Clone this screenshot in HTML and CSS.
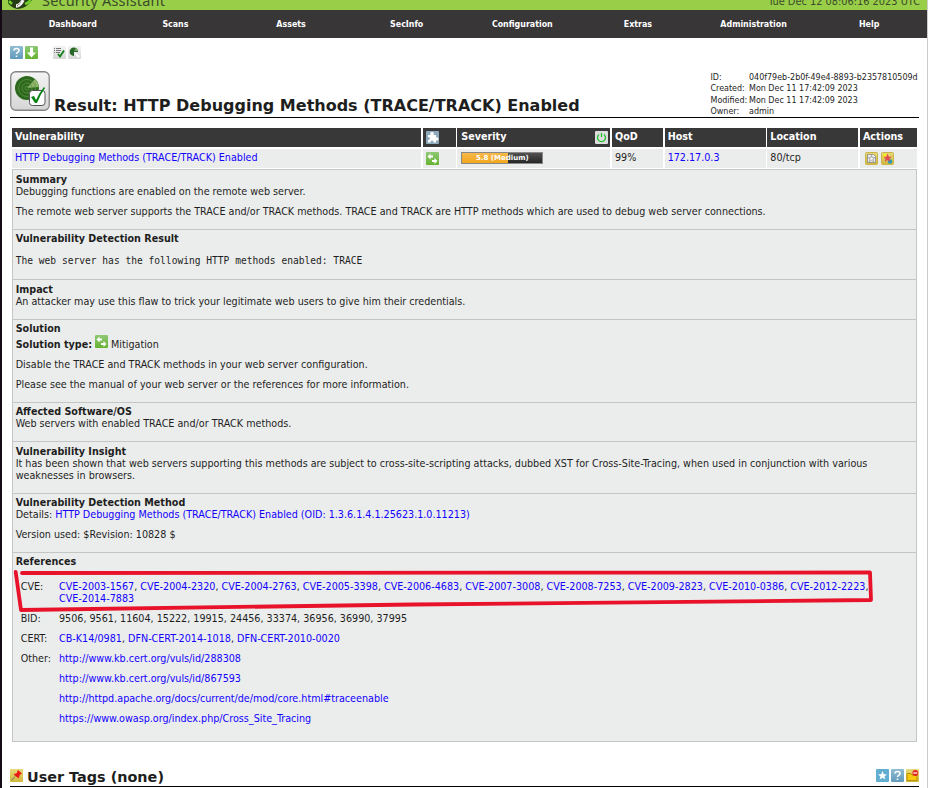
FILE: index.html
```html
<!DOCTYPE html>
<html lang="en">
<head>
<meta charset="utf-8">
<title>Security Assistant</title>
<link rel="stylesheet" href="styles.css">
</head>
<body>
<svg width="0" height="0" class="defs">
  <defs>
    <linearGradient id="green" x1="0" y1="0" x2="0" y2="1"><stop offset="0" stop-color="#90c978"/><stop offset="1" stop-color="#64b32e"/></linearGradient>
    <linearGradient id="blue" x1="0" y1="0" x2="0" y2="1"><stop offset="0" stop-color="#91bdd3"/><stop offset="1" stop-color="#609abb"/></linearGradient>
    <linearGradient id="gray" x1="0" y1="0" x2="0" y2="1"><stop offset="0" stop-color="#f4f4f4"/><stop offset="1" stop-color="#d5d5d5"/></linearGradient>
    <linearGradient id="gold" x1="0" y1="0" x2="0" y2="1"><stop offset="0" stop-color="#e8d979"/><stop offset="1" stop-color="#d1b83a"/></linearGradient>
    <symbol id="help" viewBox="0 0 13 13"><rect width="13" height="13" rx="1" fill="url(#blue)"/><path d="M4 4.5C4 1.8 9 1.8 9 4.5C9 6.4 6.5 6.2 6.5 8M6.5 9.5V11" fill="none" stroke="#fff" stroke-width="1.6"/></symbol>
    <symbol id="mitigate" viewBox="0 0 13 13"><rect width="13" height="13" rx="1" fill="url(#green)"/><path d="M1.500 4.500L4.500 1.500V3.500H7V5.500H4.500V7.500ZM11.500 9L8.500 6V8H6V10H8.500V12Z" fill="#fff"/></symbol>
  </defs>
</svg>
<div class="page">
  <header class="banner">
    <svg class="logo" width="28" height="10" viewBox="0 0 28 10"><path d="M0 0H24C21 5 15 9 9 9C5 8 1 5 0 3Z" fill="#243d12"/><path d="M1 1L4 4M17 4C20 3 22 1 22 0" fill="none" stroke="#6fd02a" stroke-width="2.5"/><path d="M8 6C11 6 13 4 15 0" stroke="#f2f2f2" stroke-width="3.500" fill="none"/><path d="M9 6C11 5 12 3 13 0" stroke="#444" stroke-dasharray="1 1" fill="none"/></svg>
    <span class="brand">Security Assistant</span>
    <span class="clock">Tue Dec 12 08:06:16 2023 UTC</span>
  </header>
  <nav class="menu"><a>Dashboard</a><a>Scans</a><a>Assets</a><a>SecInfo</a><a>Configuration</a><a>Extras</a><a>Administration</a><a>Help</a></nav>
  <main>
    <div class="tools">
      <svg width="13" height="13"><use href="#help"/></svg>
      <svg width="13" height="13"><rect width="13" height="13" rx="1" fill="url(#green)"/><path d="M5 1.500H8V6.500H11L6.500 11.500L2 6.500H5Z" fill="#fff"/></svg>
      <svg class="gap" width="13" height="13"><rect width="13" height="13" rx="1" fill="url(#gray)"/><path d="M1 2.500H2M1 4.500H2M1 6.500H2M3 2.500H8M3 4.500H8M3 6.500H7" stroke="#777"/><path d="M5 8L7 10.500L11 4.500" stroke="#128018" stroke-width="1.800" fill="none"/></svg>
      <svg width="13" height="13"><rect width="13" height="13" rx="1" fill="url(#gray)"/><path d="M6 6H10A4.200 4.200 0 1 0 6 10Z" fill="#286528"/><path d="M6 5L8 1.800A4 4 0 0 1 10 5Z" fill="#78a668"/><path d="M6 6L12 10L10 12Z" fill="#fff"/></svg>
    </div>
    <div class="title">
      <svg width="40" height="40" viewBox="0 0 40 40"><rect x=".75" y=".75" width="38.5" height="38.5" rx="5" fill="url(#gray)" stroke="#858585" stroke-width="1.3"/><circle cx="17" cy="17" r="12" fill="#2d691c"/><path d="M17 17L25 8Q28 11 29 16Z" fill="#8fb66b"/><g fill="none" stroke="#5d9046" stroke-width=".8"><circle cx="17" cy="17" r="8.5"/><circle cx="17" cy="17" r="5"/><circle cx="17" cy="17" r="2"/></g><rect x="19.500" y="19.500" width="15.500" height="15" rx="3" fill="#fff" stroke="#555"/><path d="M21 26L24 25L26 29Q29 22 34 16L35 17Q30 24 27 32H25Z" fill="#078313"/></svg>
      <h1>Result: HTTP Debugging Methods (TRACE/TRACK) Enabled</h1>
      <dl><dt>ID:</dt><dd>040f79eb-2b0f-49e4-8893-b2357810509d</dd><dt>Created:</dt><dd>Mon Dec 11 17:42:09 2023</dd><dt>Modified:</dt><dd>Mon Dec 11 17:42:09 2023</dd><dt>Owner:</dt><dd>admin</dd></dl>
    </div>
    <div class="grid head">
      <div>Vulnerability</div>
      <div><svg width="13" height="13"><rect width="13" height="13" rx="1" fill="#8eaabd"/><path d="M2 4H4.500Q3.500 1 6 1Q8.500 1 7.500 4H10V6.500Q12.500 5.500 12.500 8Q12.500 10 10 9.500V11.500H7.500Q8 9.500 6 9.500Q4 9.500 4.500 11.500H2V9Q4 9 4 7.500Q4 6 2 6Z" fill="#fff"/></svg></div>
      <div class="sev">Severity<svg width="13" height="13"><rect width="13" height="13" rx="1" fill="#ddd"/><path d="M4 3.500A4 4 0 1 0 9 3.500M6.500 2V6" fill="none" stroke="#20c52b" stroke-width="1.300"/></svg></div>
      <div>QoD</div><div>Host</div><div>Location</div><div>Actions</div>
    </div>
    <div class="grid row">
      <div><a>HTTP Debugging Methods (TRACE/TRACK) Enabled</a></div>
      <div><svg width="13" height="13"><use href="#mitigate"/></svg></div>
      <div><span class="meter">5.8 (Medium)</span></div>
      <div>99%</div><div><a>172.17.0.3</a></div><div>80/tcp</div>
      <div class="acts">
        <svg width="13" height="13"><rect x=".5" y=".5" width="12" height="12" rx="1" fill="url(#gold)" stroke="#c9b548"/><path d="M2.500 2.500H8.500L10.500 4.500V10.500H2.500Z" fill="#eee" stroke="#888" stroke-width=".8"/><path d="M6.500 3.500L7.300 5.800H9.700L7.800 7.200L8.700 9.700L6.500 8.200L4.300 9.700L5.200 7.200L3.300 5.800H5.700Z" fill="#fff" stroke="#777" stroke-width=".6"/></svg>
        <svg width="13" height="13"><rect x=".5" y=".5" width="12" height="12" rx="1" fill="url(#gold)" stroke="#c9b548"/><path d="M2 2H6V6H2Z" fill="#f1ed28"/><circle cx="9" cy="9.500" r="2.300" fill="#239cbd"/><path d="M6.500 1.500L7.800 4.700H11L8.400 6.700L9.400 10L6.500 8L3.600 10L4.600 6.700L2 4.700H5.200Z" fill="#e14b55"/></svg>
      </div>
    </div>
    <div class="details">
      <section class="s1"><h2>Summary</h2><p>Debugging functions are enabled on the remote web server.</p><p class="para">The remote web server supports the TRACE and/or TRACK methods. TRACE and TRACK are HTTP methods which are used to debug web server connections.</p></section>
      <section class="s2"><h2>Vulnerability Detection Result</h2><pre>The web server has the following HTTP methods enabled: TRACE</pre></section>
      <section class="s3"><h2>Impact</h2><p>An attacker may use this flaw to trick your legitimate web users to give him their credentials.</p></section>
      <section class="s4"><h2>Solution</h2><div class="soltype"><b>Solution type:</b><svg width="13" height="13"><use href="#mitigate"/></svg><span>Mitigation</span></div><p class="para">Disable the TRACE and TRACK methods in your web server configuration.</p><p class="para">Please see the manual of your web server or the references for more information.</p></section>
      <section class="s5"><h2>Affected Software/OS</h2><p>Web servers with enabled TRACE and/or TRACK methods.</p></section>
      <section class="s6"><h2>Vulnerability Insight</h2><p>It has been shown that web servers supporting this methods are subject to cross-site-scripting attacks, dubbed XST for Cross-Site-Tracing, when used in conjunction with various<br>weaknesses in browsers.</p></section>
      <section class="s7"><h2>Vulnerability Detection Method</h2><p>Details: <a>HTTP Debugging Methods (TRACE/TRACK) Enabled (OID: 1.3.6.1.4.1.25623.1.0.11213)</a></p><p class="para">Version used: $Revision: 10828 $</p></section>
      <section class="s8"><h2>References</h2>
        <div class="refs">
          <span>CVE:</span><p><a>CVE-2003-1567</a>, <a>CVE-2004-2320</a>, <a>CVE-2004-2763</a>, <a>CVE-2005-3398</a>, <a>CVE-2006-4683</a>, <a>CVE-2007-3008</a>, <a>CVE-2008-7253</a>, <a>CVE-2009-2823</a>, <a>CVE-2010-0386</a>, <a>CVE-2012-2223</a>,<br><a>CVE-2014-7883</a></p>
          <span>BID:</span><p>9506, 9561, 11604, 15222, 19915, 24456, 33374, 36956, 36990, 37995</p>
          <span>CERT:</span><p><a>CB-K14/0981</a>, <a>DFN-CERT-2014-1018</a>, <a>DFN-CERT-2010-0020</a></p>
          <span>Other:</span><p><a>http://www.kb.cert.org/vuls/id/288308</a></p>
          <span></span><p><a>http://www.kb.cert.org/vuls/id/867593</a></p>
          <span></span><p><a>http://httpd.apache.org/docs/current/de/mod/core.html#traceenable</a></p>
          <span></span><p><a>https://www.owasp.org/index.php/Cross_Site_Tracing</a></p>
        </div>
        <svg class="mark" width="864" height="46" viewBox="0 0 864 46" fill="none" stroke="#e8132b" stroke-linecap="round" stroke-linejoin="round"><path d="M9 5L857 4.500L858 32L400 36.500L8 42L2.700 4"/></svg>
      </section>
    </div>
    <div class="tags">
      <svg width="13" height="13"><rect width="13" height="13" rx="1" fill="url(#gold)"/><path d="M1.500 11.500L5 7.500" stroke="#777"/><path d="M8 1.500L11.500 4.500L9.500 5.500L8.500 9L4 5.500L7 4.500Z" fill="#ee1717" stroke="#ee1717" stroke-width=".7"/></svg>
      <h1>User Tags (none)</h1>
      <div class="tagtools">
        <svg width="13" height="13"><rect width="13" height="13" rx="1" fill="#62aed2"/><path d="M6.500 2L7.800 5.200L11 5.400L8.500 7.400L9.400 10.600L6.500 8.800L3.600 10.600L4.500 7.400L2 5.400L5.200 5.200Z" fill="#fff"/></svg>
        <svg width="13" height="13"><use href="#help"/></svg>
        <svg width="13" height="13"><rect width="13" height="13" rx="1" fill="url(#gold)"/><path d="M1 4.500H5L6 6H11V11.500H1Z" fill="#f6c90c" stroke="#b89208"/><circle cx="9.300" cy="4" r="2.900" fill="#e52420"/><path d="M7.300 4H11.300" stroke="#fff" stroke-width="1.200"/></svg>
      </div>
    </div>
  </main>
</div>
</body>
</html>
```
FILE: styles.css
```css
* { box-sizing: border-box; }
body { margin: 0; background: #fff; color: #1e1e1e; font: 10.680px/12px "DejaVu Sans Condensed", "DejaVu Sans", sans-serif; font-stretch: condensed; }
h1, h2, p, pre, dl, dd { margin: 0; }
svg { display: block; flex: none; }
.defs { position: absolute; }
a { color: #1200ff; }
.page { height: 788px; overflow: hidden; border-left: 2px solid #150b15; border-right: 1px solid #ccc; }
.banner { height: 10px; background: #99ce48; display: flex; overflow: hidden; color: #3a4a2a; }
.logo { margin-left: 6px; }
.brand { margin: -9px 0 0 6px; font: 14.500px/18px "Noto Sans", sans-serif; font-stretch: normal; letter-spacing: .2px; white-space: nowrap; }
.clock { margin: -5px 7px 0 auto; font-size: 10.900px; line-height: 14px; white-space: nowrap; }
.menu { height: 28px; background: #393637; display: grid; grid-template-columns: repeat(8, 1fr); align-items: center; text-align: center; font-weight: bold; }
.menu a { color: #fff; font-size: 8.800px; }
.menu a:first-child { padding-left: 26px; }
main { padding: 8px 8px 0; }
.tools { display: flex; gap: 2px; height: 25px; }
.tools .gap { margin-left: 13px; }
.title { height: 47px; border-bottom: 1px solid #000; display: flex; }
h1 { font: bold 16px/20px "DejaVu Sans", sans-serif; white-space: nowrap; }
.title h1 { margin: 25px 0 0 4px; }
dl { margin: 1px 0 0 auto; display: grid; grid-template-columns: 38.500px 170px; grid-auto-rows: 11.400px; font-size: 8.900px; line-height: 11px; white-space: nowrap; }
.grid { display: grid; grid-template-columns: 409px 33px 153px 51px 101px 91px 57px; column-gap: 1.670px; margin: 0 2px; white-space: nowrap; }
.grid > div { height: 19px; padding: 3px; }
.grid > div:nth-child(3) { padding-left: 4px; }
.head { margin-top: 10px; color: #fff; font-weight: bold; }
.head > div { background: #393838; }
.sev { display: flex; justify-content: space-between; }
.head .sev { padding-right: 2px; }
.row { margin-top: 2px; }
.row > div { background: #ebedec; }
.meter { display: block; width: 82px; height: 12px; border: 1px solid #888; background: linear-gradient(rgba(255, 255, 255, .2), rgba(255, 255, 255, 0)), linear-gradient(to right, #f3a71e 57%, #262626 57%); font: bold 7px/10px "DejaVu Sans", sans-serif; color: #fff; text-align: center; }
.acts { display: flex; gap: 3px; padding-left: 5px !important; }
.details { margin: 1px 2px 0; border: 1px solid #c4c6c5; background: #ebedec; white-space: nowrap; height: 573px; }
section { padding: 3px 0 0 2.700px; border-bottom: 1px solid #c4c6c5; }
h2 { font: inherit; font-weight: bold; }
.para { margin-top: 8px; }
pre { margin-top: 10px; font: 9.600px/12px "DejaVu Sans Mono", monospace; }
.s1 { height: 60px; padding-top: 4px; }
.s2 { height: 50px; }
.s3 { height: 40px; padding-top: 4px; }
.s4 { height: 83px; }
.s5 { height: 39px; }
.s6 { height: 52px; padding-top: 4px; }
.s7 { height: 59px; }
.s8 { height: 188px; border: 0; position: relative; }
.soltype { display: flex; height: 13px; align-items: center; margin: 3px 0 0; gap: 3px; }
.soltype svg { margin-top: -6px; }
.refs { margin: 13px 0 0 5px; display: grid; grid-template-columns: 38.300px auto; row-gap: 8px; }
.mark { position: absolute; left: 0; top: 15px; stroke-width: 3.800px; }
.tags { display: flex; height: 19px; margin-top: 26px; border-bottom: 1px solid #000; padding-top: 1px; }
.tags h1 { font-size: 14.400px; line-height: 16px; margin-left: 4px; }
.tagtools { margin-left: auto; display: flex; gap: 2px; }
```
